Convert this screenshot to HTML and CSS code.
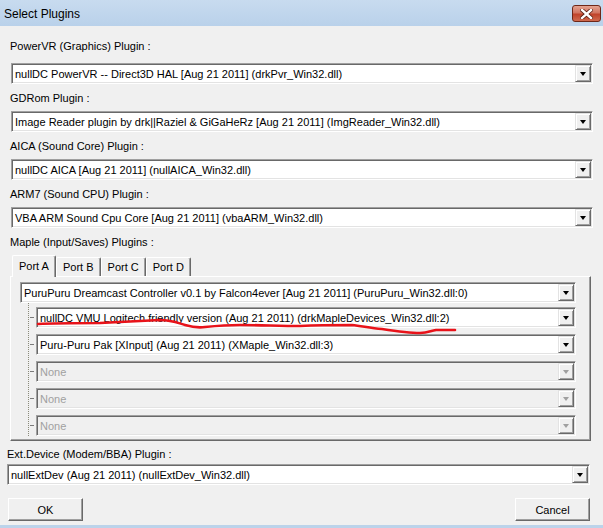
FILE: index.html
```html
<!DOCTYPE html>
<html lang="en">
<head>
    <meta charset="UTF-8">
    <title>Select Plugins</title>
    <link rel="stylesheet" href="styles.css">
</head>
<body>
    <div class="window">
        <div class="titlebar">
            <span class="title">Select Plugins</span>
            <span class="close">
                <svg width="13" height="10" viewBox="0 0 13 10">
                    <path d="M2 1 L11 9 M11 1 L2 9" stroke="#5a1e12" stroke-width="4" stroke-linecap="square"/>
                    <path d="M2 1 L11 9 M11 1 L2 9" stroke="#fff" stroke-width="2.4" stroke-linecap="square"/>
                </svg>
            </span>
        </div>

        <div class="content">
            <div class="label first">PowerVR (Graphics) Plugin :</div>
            <div class="combo"><span class="value">nullDC PowerVR -- Direct3D HAL [Aug 21 2011] (drkPvr_Win32.dll)</span><span class="drop"></span></div>

            <div class="label">GDRom Plugin :</div>
            <div class="combo"><span class="value">Image Reader plugin by drk||Raziel &amp; GiGaHeRz [Aug 21 2011] (ImgReader_Win32.dll)</span><span class="drop"></span></div>

            <div class="label">AICA (Sound Core) Plugin :</div>
            <div class="combo"><span class="value">nullDC AICA [Aug 21 2011] (nullAICA_Win32.dll)</span><span class="drop"></span></div>

            <div class="label">ARM7 (Sound CPU) Plugin :</div>
            <div class="combo"><span class="value">VBA ARM Sound Cpu Core [Aug 21 2011] (vbaARM_Win32.dll)</span><span class="drop"></span></div>

            <div class="label">Maple (Input/Saves) Plugins :</div>
            <div class="tabs">
                <span class="tab active">Port A</span>
                <span class="tab">Port B</span>
                <span class="tab">Port C</span>
                <span class="tab">Port D</span>
            </div>
            <div class="panel">
                <div class="combo"><span class="value">PuruPuru Dreamcast Controller v0.1 by Falcon4ever [Aug 21 2011] (PuruPuru_Win32.dll:0)</span><span class="drop"></span></div>
                <div class="tree">
                    <div class="branch"><span class="tick"></span><div class="combo"><span class="value">nullDC VMU Logitech friendly version (Aug 21 2011) (drkMapleDevices_Win32.dll:2)</span><span class="drop"></span></div></div>
                    <div class="branch"><span class="tick"></span><div class="combo"><span class="value">Puru-Puru Pak [XInput] (Aug 21 2011) (XMaple_Win32.dll:3)</span><span class="drop"></span></div></div>
                    <div class="branch"><span class="tick"></span><div class="combo disabled"><span class="value">None</span><span class="drop"></span></div></div>
                    <div class="branch"><span class="tick"></span><div class="combo disabled"><span class="value">None</span><span class="drop"></span></div></div>
                    <div class="branch"><span class="tick"></span><div class="combo disabled"><span class="value">None</span><span class="drop"></span></div></div>
                </div>
            </div>

            <div class="ext">
                <div class="label">Ext.Device (Modem/BBA) Plugin :</div>
                <div class="combo"><span class="value">nullExtDev (Aug 21 2011) (nullExtDev_Win32.dll)</span><span class="drop"></span></div>
                <div class="buttons">
                    <button class="btn">OK</button>
                    <button class="btn">Cancel</button>
                </div>
            </div>
        </div>

        <!-- red pen mark over the VMU entry -->
        <svg class="scribble" width="603" height="528" viewBox="0 0 603 528">
            <path d="M38 324 C55 323 80 323 100 323 C120 322 140 321 160 320 C172 320 178 323 185 325 C192 327 198 328 205 327 C215 326 225 325 240 325 C260 325 280 326 300 326 C320 325 340 325 352 325 C362 326 370 328 382 329 C395 331 408 333 420 333 C428 333 430 331 436 330 C444 330 450 330 455 330" fill="none" stroke="#e8131a" stroke-width="2.6" stroke-linecap="round"/>
        </svg>
    </div>
</body>
</html>
```

FILE: styles.css
```css
body {
    margin: 0;
    font-family: "Liberation Sans", Arial, sans-serif;
    font-size: 11px;
    color: #000;
}
.window {
    position: relative;
    width: 603px;
    height: 528px;
    box-sizing: border-box;
    background: #f0f0f0;
    border-bottom: 3px solid #bcd3ea;
    overflow: hidden;
}
.titlebar {
    height: 26px;
    display: flex;
    align-items: center;
    justify-content: space-between;
    padding: 0 2px 0 4px;
    background: linear-gradient(#c8dbef, #b9d1ea);
}
.title {
    font-size: 12px;
    margin-top: 1px;
}
.close {
    width: 27px;
    height: 15px;
    display: flex;
    align-items: center;
    justify-content: center;
    border: 1px solid #6e2718;
    border-radius: 3px;
    background: linear-gradient(#e4a391, #d27561 45%, #c0432a 55%, #cf6a4f);
    margin-top: 1px;
}
.content {
    padding: 14px 10px 0 10px;
}
.label {
    line-height: 13px;
    margin-bottom: 6px;
}
.label.first {
    margin-bottom: 10px;
}
.combo {
    display: flex;
    align-items: center;
    height: 21px;
    box-sizing: border-box;
    margin-left: 1px;
    margin-bottom: 8px;
    background: #fff;
    border: 1px solid;
    border-color: #a0a0a0 #fff #fff #a0a0a0;
    box-shadow: inset 1px 1px #696969, inset -1px -1px #e3e3e3;
}
.value {
    flex: 1;
    padding-left: 3px;
    white-space: nowrap;
    overflow: hidden;
}
.drop {
    position: relative;
    width: 16px;
    height: 17px;
    box-sizing: border-box;
    margin-right: 1px;
    background: #f0f0f0;
    border: 1px solid;
    border-color: #e3e3e3 #696969 #696969 #e3e3e3;
    box-shadow: inset 1px 1px #fff, inset -1px -1px #a0a0a0;
}
.drop::after {
    content: "";
    position: absolute;
    left: 4px;
    top: 6px;
    border-top: 4px solid #000;
    border-left: 3.5px solid transparent;
    border-right: 3.5px solid transparent;
}
.combo.disabled {
    background: #f0f0f0;
    color: #a0a0a0;
}
.combo.disabled .drop::after {
    border-top-color: #a0a0a0;
}
.tabs {
    display: flex;
    align-items: flex-end;
    margin-top: 4px;
    padding-left: 2px;
    height: 21px;
}
.tab {
    position: relative;
    padding: 0 6px;
    height: 18px;
    line-height: 18px;
    border-top: 1px solid #fff;
    border-left: 1px solid #fff;
    border-right: 1px solid #696969;
    box-shadow: inset -1px 0 #a0a0a0;
    border-radius: 2px 2px 0 0;
}
.tab.active {
    height: 21px;
    line-height: 20px;
    margin-bottom: -1px;
    background: #f0f0f0;
    z-index: 1;
}
.panel {
    margin-right: 2px;
    padding: 5px 14px 4px 8px;
    border: 1px solid;
    border-color: #fff #696969 #696969 #fff;
    box-shadow: inset -1px -1px #a0a0a0;
}
.panel .combo {
    margin-bottom: 0;
}
.tree {
    margin-left: 9px;
    padding-top: 4px;
    border-left: 1px dotted #8a8a7a;
    display: flex;
    flex-direction: column;
    gap: 6px;
}
.branch {
    display: flex;
    align-items: center;
}
.tick {
    width: 4px;
    height: 1px;
    margin: 0 2px 0 1px;
    background: #7a7a7a;
}
.branch .combo {
    flex: 1;
    margin-left: 0;
}
.ext {
    margin: 7px 3px 0 -3px;
}
.ext .label {
    margin-bottom: 3px;
}
.ext .combo {
    margin-left: 0;
    margin-bottom: 13px;
}
.buttons {
    display: flex;
    justify-content: space-between;
    padding-left: 1px;
}
.btn {
    width: 75px;
    height: 23px;
    padding: 0;
    font-family: inherit;
    font-size: 11px;
    color: #000;
    background: #f0f0f0;
    border: 1px solid;
    border-color: #fff #696969 #696969 #fff;
    box-shadow: inset -1px -1px #a0a0a0;
}
.scribble {
    position: absolute;
    left: 0;
    top: 0;
    pointer-events: none;
}
```
